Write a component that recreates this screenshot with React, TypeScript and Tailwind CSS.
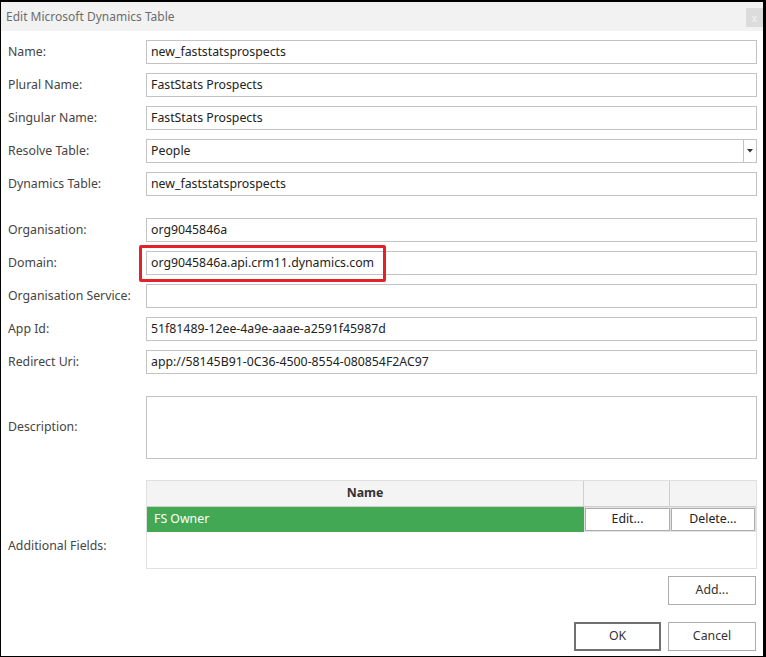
import React from "react";

const font = { fontFamily: '"Segoe UI", "Noto Sans", "Open Sans", sans-serif' };

function Label({ children }: { children: React.ReactNode }) {
  return <div className="w-[145px] shrink-0 pl-[7px] text-[12.3px] text-[#444444] leading-[24px] self-start">{children}</div>;
}

function Row({ label, value, mt = "mt-[9px]" }: { label: string; value?: string; mt?: string }) {
  return (
    <div className={`flex pr-[6px] ${mt}`}>
      <Label>{label}</Label>
      <div className="h-[24px] flex-1 border border-[#c3c3c3] bg-white pl-[4px] text-[12.3px] text-[#222222] leading-[22px]">
        {value}
      </div>
    </div>
  );
}

export default function App() {
  return (
    <div style={font} className="w-[766px] h-[657px] bg-black pt-[2px] pl-[1px] pr-[3px] pb-[1px]">
      <div className="w-full h-full bg-white flex flex-col">
        {/* Title bar */}
        <div className="h-[29px] bg-[#f2f2f2] flex items-center justify-between pl-[5px] shrink-0">
          <span className="text-[12px] text-[#6d6d6d]">Edit Microsoft Dynamics Table</span>
          <div className="w-[17px] h-[19px] bg-[#dcdcdc] mt-[2px] flex items-center justify-center text-[10px] text-[#f4f4f4] leading-none">x</div>
        </div>

        <div className="flex flex-col">
          <Row label="Name:" value="new_faststatsprospects" mt="mt-[9px]" />
          <Row label="Plural Name:" value="FastStats Prospects" />
          <Row label="Singular Name:" value="FastStats Prospects" />
          <div className="flex pr-[6px] mt-[9px]">
            <Label>Resolve Table:</Label>
            <div className="h-[24px] flex-1 border border-[#c3c3c3] bg-white flex">
              <div className="flex-1 pl-[4px] text-[12.3px] text-[#222222] leading-[22px]">People</div>
              <div className="w-[13px] border-l border-[#c3c3c3] flex items-center justify-center">
                <svg width="6" height="4" viewBox="0 0 6 4"><path d="M0 0H6L3 3.5Z" fill="#333" /></svg>
              </div>
            </div>
          </div>
          <Row label="Dynamics Table:" value="new_faststatsprospects" />
          <Row label="Organisation:" value="org9045846a" mt="mt-[22px]" />
          <div className="flex pr-[6px] mt-[9px]">
            <Label>Domain:</Label>
            <div className="relative h-[24px] flex-1 border border-[#c3c3c3] bg-white pl-[4px] text-[12.3px] text-[#222222] leading-[22px]">
              org9045846a.api.crm11.dynamics.com
              <div className="absolute left-[-8px] top-[-7px] w-[247px] h-[37px] border-[3px] border-[#e3212b] rounded-[2px]" />
            </div>
          </div>
          <Row label="Organisation Service:" />
          <Row label="App Id:" value="51f81489-12ee-4a9e-aaae-a2591f45987d" />
          <Row label="Redirect Uri:" value="app://58145B91-0C36-4500-8554-080854F2AC97" />

          {/* Description */}
          <div className="flex pr-[6px] mt-[22px]">
            <div className="w-[145px] shrink-0 pl-[7px] text-[12.3px] text-[#444444] flex items-center">Description:</div>
            <div className="h-[63px] flex-1 border border-[#c3c3c3] bg-white" />
          </div>

          {/* Additional fields */}
          <div className="flex pr-[6px] mt-[21px]">
            <div className="w-[145px] shrink-0 pl-[7px] text-[12.3px] text-[#444444] flex items-end pb-[14px]">Additional Fields:</div>
            <div className="flex-1 h-[89px] border border-[#e0e0e0] bg-white flex flex-col">
              <div className="h-[26px] flex bg-[#f4f4f4] border-b border-[#cfcfcf]">
                <div className="w-[437px] flex items-center justify-center text-[12.3px] font-bold text-[#333333] border-r border-[#cfcfcf]">Name</div>
                <div className="w-[86px] border-r border-[#cfcfcf]" />
                <div className="flex-1" />
              </div>
              <div className="h-[25px] flex bg-[#e2e2e2]">
                <div className="w-[437px] bg-[#43a853] text-white text-[12.3px] pl-[7px] leading-[24px]">FS Owner</div>
                <div className="w-[86px] p-[1px] pr-0">
                  <div className="h-full bg-white border border-[#adadad] flex items-center justify-center text-[12.3px] text-[#222222]">Edit...</div>
                </div>
                <div className="flex-1 p-[1px]">
                  <div className="h-full bg-white border border-[#adadad] flex items-center justify-center text-[12.3px] text-[#222222]">Delete...</div>
                </div>
              </div>
              <div className="flex-1" />
            </div>
          </div>

          {/* Add button */}
          <div className="flex justify-end pr-[7px] mt-[7px]">
            <div className="w-[88px] h-[29px] border border-[#adadad] bg-white flex items-center justify-center text-[12.3px] text-[#333333]">Add...</div>
          </div>

          {/* OK / Cancel */}
          <div className="flex justify-end pr-[7px] mt-[17px] gap-[7px]">
            <div className="w-[87px] h-[29px] border-2 border-[#707070] bg-white flex items-center justify-center text-[12.3px] text-[#333333]">OK</div>
            <div className="w-[88px] h-[29px] border border-[#adadad] bg-white flex items-center justify-center text-[12.3px] text-[#333333]">Cancel</div>
          </div>
        </div>
      </div>
    </div>
  );
}
